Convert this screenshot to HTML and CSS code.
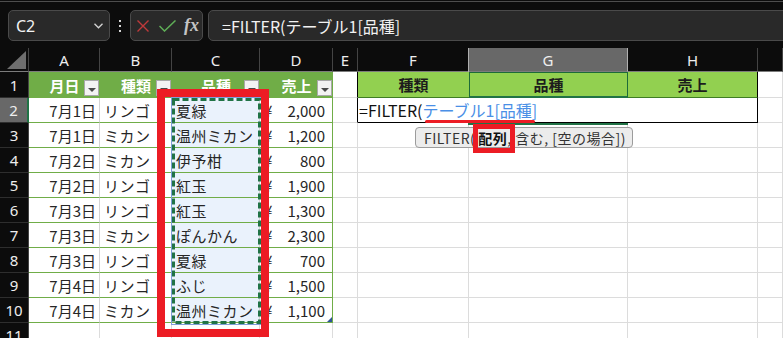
FILE: index.html
```html
<!DOCTYPE html>
<html lang="ja">
<head>
  <meta charset="UTF-8" />
  <meta name="viewport" content="width=device-width, initial-scale=1" />
  <title>FILTER関数</title>
  <link rel="stylesheet" href="styles.css">
</head>
<body>
  <div class="formula-bar">
    <div class="name-box">
      <span>C2</span>
      <svg class="chevron" width="9" height="6" viewBox="0 0 9 6"><polyline points="0.5,0.8 4.5,4.8 8.5,0.8" /></svg>
    </div>
    <div class="grip"><i></i><i></i><i></i></div>
    <div class="fx-buttons">
      <svg class="cancel" width="12" height="12" viewBox="0 0 12 12"><path d="M0.5 0.5 L11.5 11.5 M11.5 0.5 L0.5 11.5" /></svg>
      <svg class="enter" width="17" height="12" viewBox="0 0 17 12"><polyline points="0.5,6 5.5,11 16.5,0.5" /></svg>
      <span class="fx">fx</span>
    </div>
    <div class="formula-input">=FILTER(テーブル1[品種]</div>
  </div>

  <div class="sheet" id="sheet">
    <svg class="marquee" width="91" height="228" viewBox="0 0 91 228">
      <rect x="0.5" y="0.5" width="90" height="227" fill="none" stroke="#7f9fd8" stroke-width="1" />
      <rect x="2.5" y="2.5" width="86" height="223" fill="none" stroke="#217346" stroke-width="3" stroke-dasharray="6 3" />
    </svg>
    <div class="mark-column"></div>
    <div class="ref-underline"></div>
    <div class="tooltip">FILTER(<b>配列</b>, 含む, [空の場合])</div>
    <div class="mark-arg"></div>
  </div>

  <script>
    const letters = ['', 'A', 'B', 'C', 'D', 'E', 'F', 'G', 'H', ''];
    const data = [
      ['7月1日', 'リンゴ', '夏緑', '2,000'],
      ['7月1日', 'ミカン', '温州ミカン', '1,200'],
      ['7月2日', 'ミカン', '伊予柑', '800'],
      ['7月2日', 'リンゴ', '紅玉', '1,900'],
      ['7月3日', 'リンゴ', '紅玉', '1,300'],
      ['7月3日', 'ミカン', 'ぽんかん', '2,300'],
      ['7月3日', 'リンゴ', '夏緑', '700'],
      ['7月4日', 'リンゴ', 'ふじ', '1,500'],
      ['7月4日', 'ミカン', '温州ミカン', '1,100']
    ];

    const sheet = document.getElementById('sheet');
    function cell(cls, html) {
      const div = document.createElement('div');
      div.className = 'cell ' + cls;
      if (html) div.innerHTML = html;
      sheet.appendChild(div);
      return div;
    }

    // column headers
    letters.forEach((l, i) => {
      if (i === 0) cell('corner');
      else cell(l === 'G' ? 'col-head active' : 'col-head', l);
    });

    // row 1: table header + criteria header
    cell('row-head', '1');
    ['月日', '種類', '品種', '売上'].forEach(t => {
      cell('th', `<span>${t}</span><span class="filter-btn"></span>`);
    });
    cell('edge');
    cell('hdr2 first', '種類');
    cell('hdr2 active', '品種');
    cell('hdr2 last', '売上');
    cell('');

    // rows 2-10
    data.forEach((row, i) => {
      cell(i === 0 ? 'row-head active' : 'row-head', String(i + 2));
      cell('td date', row[0]);
      cell('td text', row[1]);
      cell('td text sel', row[2]);
      cell(i === data.length - 1 ? 'td amount end' : 'td amount', `<span>¥</span><span>${row[3]}</span>`);
      if (i === 0) {
        cell('edge');
        cell('editing', '=FILTER(<span class="ref">テーブル1[品種]</span>');
      } else {
        cell('');
        cell('');
        cell('');
        cell('');
      }
      cell('');
    });

    // row 11
    cell('row-head', '11');
    for (let i = 0; i < 9; i++) cell('');
  </script>
</body>
</html>
```

FILE: styles.css
```css
* {
  box-sizing: border-box;
}
body {
  margin: 0;
  width: 783px;
  height: 338px;
  overflow: hidden;
  background: #0c0c0c;
  font-family: "Noto Sans CJK JP", "Noto Sans", sans-serif;
}

/* formula bar */
.formula-bar {
  display: flex;
  align-items: flex-start;
  height: 47px;
  margin-top: 1px;
  padding-top: 8px;
  border-top: 1px solid #4d4d4d;
}
.name-box {
  display: flex;
  align-items: center;
  justify-content: space-between;
  width: 102px;
  height: 31px;
  margin-left: 8px;
  padding: 0 6px 0 7px;
  background: #292929;
  border: 1px solid #4a4a4a;
  border-radius: 5px;
  color: #f2f2f2;
  font-family: "Noto Sans", sans-serif;
  font-size: 16px;
}
.chevron polyline {
  fill: none;
  stroke: #d4d4d4;
  stroke-width: 1.3;
}
.grip {
  display: flex;
  flex-direction: column;
  align-items: center;
  justify-content: center;
  gap: 3px;
  width: 20px;
  height: 31px;
}
.grip i {
  width: 2px;
  height: 2px;
  background: #d4d4d4;
}
.fx-buttons {
  display: flex;
  align-items: center;
  width: 73px;
  height: 31px;
  padding-left: 6px;
  background: #292929;
  border: 1px solid #4a4a4a;
  border-radius: 5px;
}
.cancel path {
  stroke: #c0393b;
  stroke-width: 1.4;
}
.enter {
  margin-left: 10px;
}
.enter polyline {
  fill: none;
  stroke: #5fae57;
  stroke-width: 1.5;
}
.fx {
  margin-left: 8px;
  color: #c4c4c4;
  font-family: "Liberation Serif", serif;
  font-style: italic;
  font-weight: 700;
  font-size: 18px;
}
.formula-input {
  flex: 1;
  display: flex;
  align-items: center;
  height: 31px;
  margin-left: 5px;
  margin-right: -10px;
  padding-left: 13px;
  background: #292929;
  border: 1px solid #4a4a4a;
  border-radius: 5px;
  color: #f2f2f2;
  font-size: 16px;
}

/* sheet grid */
.sheet {
  position: relative;
  display: grid;
  grid-template-columns: 29px 71px 72px 88px 73px 25px 111px 159px 130px 25px;
  grid-template-rows: 24px 26px repeat(10, 25px);
  background: #fff;
  color: #262626;
  font-size: 15px;
}
.cell {
  display: flex;
  align-items: center;
  white-space: nowrap;
  border-right: 1px solid #dcdcdc;
  border-bottom: 1px solid #dcdcdc;
}
.corner {
  align-items: flex-end;
  justify-content: flex-end;
  padding: 0 2px 2px 0;
  background: #0c0c0c;
  border-right-color: #444;
  border-bottom-color: #7c7c7c;
}
.corner::after {
  content: '';
  width: 19px;
  height: 18px;
  background: #6e6e6e;
  clip-path: polygon(100% 0, 100% 100%, 0 100%);
}
.col-head {
  justify-content: center;
  background: #0c0c0c;
  color: #eee;
  font-family: "Noto Sans", sans-serif;
  border-right-color: #444;
  border-bottom-color: #7c7c7c;
}
.col-head.active {
  background: #686868;
  border-right-color: #b0b0b0;
  box-shadow: -1px 0 0 #b0b0b0;
}
.row-head {
  justify-content: center;
  background: #0c0c0c;
  color: #eee;
  font-family: "Noto Sans", sans-serif;
  border-right-color: #444;
  border-bottom-color: #2e2e2e;
}
.row-head.active {
  background: #686868;
  border-right: 2px solid #217346;
}

/* table */
.th {
  position: relative;
  justify-content: center;
  background: #70ad47;
  color: #fff;
  font-weight: 700;
  border: none;
}
.filter-btn {
  position: absolute;
  right: 1px;
  top: 8px;
  display: flex;
  align-items: center;
  justify-content: center;
  width: 15px;
  height: 16px;
  background: #f3f3f3;
  border: 1px solid #a9a9a9;
}
.filter-btn::after {
  content: '';
  margin-top: 3px;
  border-left: 4px solid transparent;
  border-right: 4px solid transparent;
  border-top: 4px solid #4a4a4a;
}
.td {
  border-right-color: #d4d4d4;
  border-bottom-color: #70ad47;
}
.td.date {
  justify-content: flex-end;
  padding-right: 3px;
}
.td.text {
  padding-left: 4px;
  letter-spacing: 0.5px;
}
.td.sel {
  background: #eaf2fc;
}
.td.amount {
  justify-content: space-between;
  padding: 0 7px 0 4px;
  border-right-color: #70ad47;
}
.td.end {
  position: relative;
}
.td.end::after {
  content: '';
  position: absolute;
  right: 0;
  bottom: 0;
  width: 5px;
  height: 5px;
  background: #2f5597;
  clip-path: polygon(100% 0, 100% 100%, 0 100%);
}

/* criteria area */
.edge {
  border-right-color: #000;
}
.hdr2 {
  justify-content: center;
  background: #92d050;
  color: #1c1c1c;
  font-weight: 700;
  border-right: none;
  border-bottom-color: #3f7d24;
}
.hdr2.last {
  border-right: 1px solid #000;
}
.hdr2.active {
  border: 1px solid #1d6b38;
  border-bottom: 2px solid #217346;
}
.editing {
  position: relative;
  grid-column: span 3;
  padding-left: 1px;
  border-right-color: #000;
  border-bottom-color: #000;
  color: #111;
  font-size: 16px;
}
.editing::after {
  content: '';
  position: absolute;
  left: 110px;
  bottom: -3px;
  width: 160px;
  height: 2px;
  background: #217346;
}
.ref {
  color: #4a8fe6;
}

/* overlays */
.marquee {
  position: absolute;
  left: 171px;
  top: 49px;
  z-index: 2;
}
.mark-column {
  position: absolute;
  left: 157px;
  top: 41px;
  width: 112px;
  height: 248px;
  border: 8px solid #ec1c24;
  z-index: 3;
}
.ref-underline {
  position: absolute;
  left: 425px;
  top: 72px;
  width: 110px;
  height: 3px;
  border-radius: 2px;
  background: #ec1c24;
  z-index: 3;
}
.tooltip {
  position: absolute;
  left: 415px;
  top: 79px;
  width: 218px;
  height: 21px;
  display: flex;
  align-items: center;
  padding-left: 8px;
  background: #ececec;
  border: 1px solid #9c9c9c;
  border-radius: 4px;
  color: #333;
  font-size: 14px;
  letter-spacing: 0.5px;
  white-space: nowrap;
  z-index: 2;
}
.tooltip b {
  margin-left: 3px;
  color: #111;
}
.mark-arg {
  position: absolute;
  left: 473px;
  top: 76px;
  width: 42px;
  height: 29px;
  border: 5px solid #ec1c24;
  z-index: 3;
}
```
